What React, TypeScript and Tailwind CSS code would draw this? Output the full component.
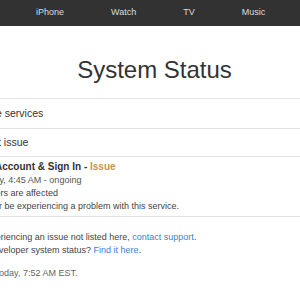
export default function App() {
  return (
    <div className="w-[300px] h-[300px] overflow-hidden bg-white font-['Liberation_Sans',Arial,sans-serif] text-[#333]">
      <nav className="h-[26px] bg-[#323232] flex items-center gap-[47px] pl-[36px] text-[9px] text-[#dcdcdc] whitespace-nowrap">
        <span>iPhone</span>
        <span>Watch</span>
        <span>TV</span>
        <span>Music</span>
      </nav>
      <h1 className="mt-[30px] text-[24px] leading-[28px] text-center pl-[9px] text-[#333]">System Status</h1>
      <div className="mt-[14px] whitespace-nowrap">
        <div className="border-t border-[#e3e3e3] h-[30px] flex items-center text-[10.5px]">
          <span className="-ml-[4px]">e services</span>
        </div>
        <div className="border-t border-[#e3e3e3] h-[28px] flex items-center text-[10.5px]">
          <span className="-ml-[2px]">t issue</span>
        </div>
        <div className="border-t border-[#e3e3e3] pt-[3px] pb-[3px] flex flex-col">
          <div className="text-[10px] leading-[14px] font-bold -ml-[5px]">
            Account &amp; Sign In - <span className="text-[#c9914e]">Issue</span>
          </div>
          <div className="text-[9px] leading-[13px] text-[#555] -ml-[20px]">Today, 4:45 AM - ongoing</div>
          <div className="text-[9px] leading-[13px] text-[#444] -ml-[40px]">Some users are affected</div>
          <div className="text-[9px] leading-[13px] text-[#444] -ml-[1px]">r be experiencing a problem with this service.</div>
        </div>
        <div className="border-t border-[#e3e3e3] pt-[14px] text-[9px] leading-[13px] text-[#444]">
          <div className="-ml-[53px]">
            If you're experiencing an issue not listed here, <span className="text-[#3a7fd0]">contact support</span>.
          </div>
          <div className="-ml-[58px]">
            Looking for developer system status? <span className="text-[#3a7fd0]">Find it here</span>.
          </div>
          <div className="mt-[10px] -ml-[58px] text-[#666]">Last updated today, 7:52 AM EST.</div>
        </div>
      </div>
    </div>
  );
}
